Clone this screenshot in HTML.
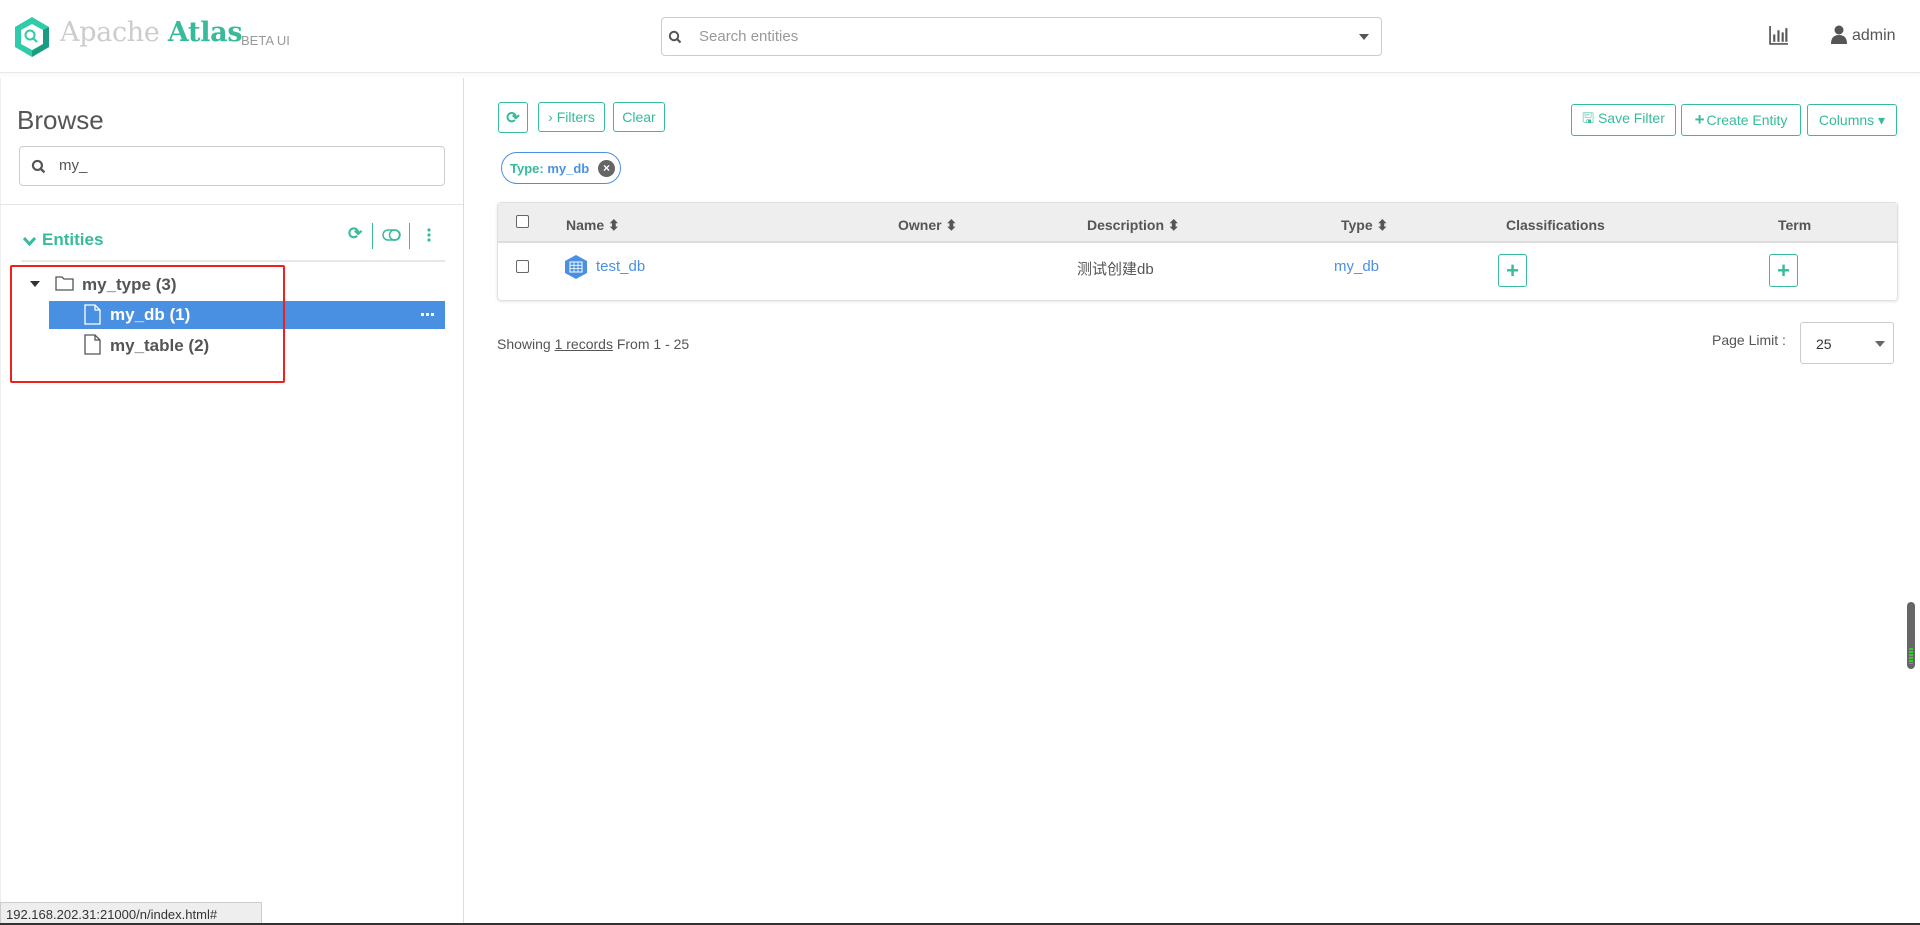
<!DOCTYPE html>
<html><head><meta charset="utf-8"><style>
*{box-sizing:border-box;margin:0;padding:0}
body{width:1920px;height:925px;overflow:hidden;background:#fff;font-family:"Liberation Sans","Noto Sans CJK SC",sans-serif;color:#555;position:relative}
.abs{position:absolute;white-space:nowrap}
.hdr{left:0;top:0;width:1920px;height:73px;background:#fff;border-bottom:1px solid #e8e8e8;box-shadow:0 2px 4px rgba(0,0,0,.04)}
.g{color:#37bb9b}
.btn{position:absolute;border:1px solid #37bb9b;border-radius:3px;color:#37bb9b;font-size:14px;display:flex;align-items:center;justify-content:center;background:#fff;white-space:nowrap}
.th{position:absolute;top:217px;font-size:14px;font-weight:bold;color:#555;white-space:nowrap}
</style></head><body>
<div class="abs hdr"></div>
<svg class="abs" style="left:13px;top:16px" width="38" height="42" viewBox="0 0 38 42"><polygon points="19,1 36,11 36,31 19,41 2,31 2,11" fill="#2fcbaa"/><polygon points="19,41 36,31 36,11 30,14 30,28 19,35" fill="#1a9c82"/><polygon points="19,8 30,14 30,28 19,34 8,28 8,14" fill="#fff"/><circle cx="17" cy="19" r="4.5" fill="none" stroke="#2fcbaa" stroke-width="2"/><line x1="20" y1="22" x2="24" y2="26" stroke="#2fcbaa" stroke-width="2"/></svg>
<div class="abs" style="left:60px;top:17px;font-family:'DejaVu Serif','Liberation Serif',serif;font-size:27px;color:#ccc;letter-spacing:-0.3px">Apache <span style="color:#37bb9b;font-weight:bold">Atlas</span></div>
<div class="abs" style="left:241px;top:33px;font-size:13px;color:#999">BETA UI</div>
<div class="abs" style="left:661px;top:17px;width:721px;height:39px;border:1px solid #ccc;border-radius:4px"></div>
<svg class="abs" style="left:668px;top:30px" width="14" height="14" viewBox="0 0 14 14"><circle cx="6" cy="6" r="4.2" fill="none" stroke="#555" stroke-width="2"/><line x1="9" y1="9" x2="12.5" y2="12.5" stroke="#555" stroke-width="2.2"/></svg>
<div class="abs" style="left:699px;top:28px;font-size:15px;color:#999">Search entities</div>
<div class="abs" style="left:1359px;top:34px;border-left:5px solid transparent;border-right:5px solid transparent;border-top:6px solid #555"></div>
<svg class="abs" style="left:1768px;top:25px" width="22" height="20" viewBox="0 0 19 19"><path d="M1 1V18H18" fill="none" stroke="#555" stroke-width="1.6"/><rect x="4" y="9" width="2" height="7" fill="#555"/><rect x="8" y="5" width="2" height="11" fill="#555"/><rect x="12" y="7" width="2" height="9" fill="#555"/><rect x="15.5" y="3" width="2" height="13" fill="#555"/></svg>
<svg class="abs" style="left:1831px;top:25px" width="16" height="20" viewBox="0 0 16 20"><circle cx="8" cy="5" r="4.5" fill="#555"/><path d="M0 19Q0 10 8 10Q16 10 16 19Z" fill="#555"/></svg>
<div class="abs" style="left:1852px;top:27px;font-size:16px;color:#555">admin</div>

<div class="abs" style="left:463px;top:78px;width:1px;height:847px;background:#ddd"></div>
<div class="abs" style="left:0;top:78px;width:1px;height:847px;background:#eee"></div>
<div class="abs" style="left:17px;top:105px;font-size:26px;color:#555">Browse</div>
<div class="abs" style="left:19px;top:146px;width:426px;height:40px;border:1px solid #ccc;border-radius:4px"></div>
<svg class="abs" style="left:31px;top:159px" width="15" height="15" viewBox="0 0 14 14"><circle cx="6" cy="6" r="4.2" fill="none" stroke="#555" stroke-width="2"/><line x1="9" y1="9" x2="12.5" y2="12.5" stroke="#555" stroke-width="2.2"/></svg>
<div class="abs" style="left:59px;top:157px;font-size:15px;color:#555">my_</div>
<div class="abs" style="left:0;top:204px;width:463px;height:1px;background:#e5e5e5"></div>
<svg class="abs" style="left:22px;top:236px" width="15" height="11" viewBox="0 0 15 11"><path d="M2 2L7.5 8L13 2" fill="none" stroke="#37bb9b" stroke-width="3"/></svg>
<div class="abs g" style="left:42px;top:230px;font-size:17px;font-weight:bold">Entities</div>
<div class="abs g" style="left:348px;top:224px;font-size:17px;font-weight:bold">⟳</div>
<div class="abs" style="left:372px;top:223px;width:1px;height:26px;background:#37bb9b"></div>
<svg class="abs" style="left:382px;top:228px" width="20" height="14"><rect x="1" y="2" width="17" height="10" rx="5" fill="none" stroke="#37bb9b" stroke-width="1.5"/><circle cx="12.5" cy="7" r="5" fill="none" stroke="#37bb9b" stroke-width="1.5"/></svg>
<div class="abs" style="left:409px;top:223px;width:1px;height:26px;background:#37bb9b"></div>
<svg class="abs" style="left:427px;top:228px" width="4" height="14"><circle cx="2" cy="2" r="1.6" fill="#37bb9b"/><circle cx="2" cy="7" r="1.6" fill="#37bb9b"/><circle cx="2" cy="12" r="1.6" fill="#37bb9b"/></svg>
<div class="abs" style="left:21px;top:260px;width:424px;height:2px;background:#e8e8e8"></div>
<div class="abs" style="left:30px;top:281px;border-left:5px solid transparent;border-right:5px solid transparent;border-top:6px solid #333"></div>
<svg class="abs" style="left:55px;top:275px" width="20" height="16"><path d="M1 2H7L9 4H18V15H1Z" fill="none" stroke="#555" stroke-width="1.3"/></svg>
<div class="abs" style="left:82px;top:275px;font-size:17px;font-weight:bold;color:#555">my_type (3)</div>
<div class="abs" style="left:49px;top:301px;width:396px;height:28px;background:#4a90e2"></div>
<svg class="abs" style="left:84px;top:304px" width="17" height="21"><path d="M1 1H11L16 6V20H1Z M11 1V6H16" fill="none" stroke="#fff" stroke-width="1.3"/></svg>
<div class="abs" style="left:110px;top:305px;font-size:17px;font-weight:bold;color:#fff">my_db (1)</div>
<svg class="abs" style="left:421px;top:313px" width="13" height="3"><rect x="0" y="0" width="3" height="3" fill="#fff"/><rect x="5" y="0" width="3" height="3" fill="#fff"/><rect x="10" y="0" width="3" height="3" fill="#fff"/></svg>
<svg class="abs" style="left:84px;top:334px" width="17" height="21"><path d="M1 1H11L16 6V20H1Z M11 1V6H16" fill="none" stroke="#555" stroke-width="1.3"/></svg>
<div class="abs" style="left:110px;top:336px;font-size:17px;font-weight:bold;color:#555">my_table (2)</div>
<div class="abs" style="left:10px;top:265px;width:275px;height:118px;border:2px solid #f0201a;border-radius:2px"></div>

<div class="btn" style="left:498px;top:102px;width:30px;height:31px;font-size:16px;font-weight:bold">⟳</div>
<div class="btn" style="left:538px;top:102px;width:67px;height:30px;font-size:14px">›&nbsp;Filters</div>
<div class="btn" style="left:613px;top:102px;width:52px;height:30px">Clear</div>
<div class="abs" style="left:501px;top:152px;width:120px;height:32px;border:1px solid #4a90e2;border-radius:16px;font-size:13px;font-weight:bold;padding:8px 0 0 8px"><span class="g">Type:</span> <span style="color:#4a90e2">my_db</span></div>
<div class="abs" style="left:598px;top:160px;width:17px;height:17px;border-radius:50%;background:#666;color:#fff;font-size:12px;text-align:center;line-height:17px;font-weight:bold">×</div>
<div class="btn" style="left:1571px;top:104px;width:105px;height:32px">🖫&nbsp;Save Filter</div>
<div class="btn" style="left:1681px;top:104px;width:120px;height:32px"><b style="font-size:17px;margin-right:2px">+</b>Create Entity</div>
<div class="btn" style="left:1807px;top:104px;width:90px;height:32px">Columns ▾</div>

<div class="abs" style="left:497px;top:202px;width:1401px;height:99px;border:1px solid #e0e0e0;border-radius:4px;box-shadow:0 1px 3px rgba(0,0,0,.1)"></div>
<div class="abs" style="left:498px;top:203px;width:1399px;height:40px;background:#eee;border-bottom:2px solid #ddd"></div>
<div class="abs" style="left:516px;top:215px;width:13px;height:13px;border:1px solid #666;border-radius:2px;background:#fff"></div>
<div class="th" style="left:566px">Name ⬍</div>
<div class="th" style="left:898px">Owner ⬍</div>
<div class="th" style="left:1087px">Description ⬍</div>
<div class="th" style="left:1341px">Type ⬍</div>
<div class="th" style="left:1506px">Classifications</div>
<div class="th" style="left:1778px">Term</div>
<div class="abs" style="left:516px;top:260px;width:13px;height:13px;border:1px solid #666;border-radius:2px;background:#fff"></div>
<svg class="abs" style="left:564px;top:254px" width="24" height="26"><polygon points="12,1 23,7 23,19 12,25 1,19 1,7" fill="#4a90e2"/><rect x="6" y="8" width="12" height="10" fill="none" stroke="#fff" stroke-width="1"/><path d="M6 11.3H18M6 14.6H18M10 8V18M14 8V18" stroke="#fff" stroke-width=".8"/></svg>
<div class="abs" style="left:596px;top:258px;font-size:15px;color:#4a90e2">test_db</div>
<div class="abs" style="left:1077px;top:258px;font-size:15px;color:#555">测试创建db</div>
<div class="abs" style="left:1334px;top:258px;font-size:15px;color:#4a90e2">my_db</div>
<div class="btn" style="left:1498px;top:254px;width:29px;height:33px;font-size:22px;font-weight:bold">+</div>
<div class="btn" style="left:1769px;top:254px;width:29px;height:33px;font-size:22px;font-weight:bold">+</div>
<div class="abs" style="left:497px;top:336px;font-size:14px;color:#555">Showing <u>1 records</u> From 1 - 25</div>
<div class="abs" style="left:1712px;top:332px;font-size:14px;color:#555">Page Limit :</div>
<div class="abs" style="left:1800px;top:322px;width:94px;height:42px;border:1px solid #ccc;border-radius:3px;font-size:14px;padding:13px 0 0 15px;color:#333">25</div>
<div class="abs" style="left:1875px;top:341px;border-left:5px solid transparent;border-right:5px solid transparent;border-top:6px solid #666"></div>
<div class="abs" style="left:1907px;top:602px;width:8px;height:67px;background:#666;border-radius:4px"></div>
<div class="abs" style="left:1909px;top:648px;width:4px;height:16px;background:repeating-linear-gradient(#3c3 0 2px,#666 2px 3px)"></div>
<div class="abs" style="left:0;top:902px;width:262px;height:23px;background:#eee;border:1px solid #ccc;font-size:13px;color:#333;padding:4px 0 0 5px">192.168.202.31:21000/n/index.html#</div>
<div class="abs" style="left:0;top:923px;width:1920px;height:2px;background:#333"></div>
</body></html>
